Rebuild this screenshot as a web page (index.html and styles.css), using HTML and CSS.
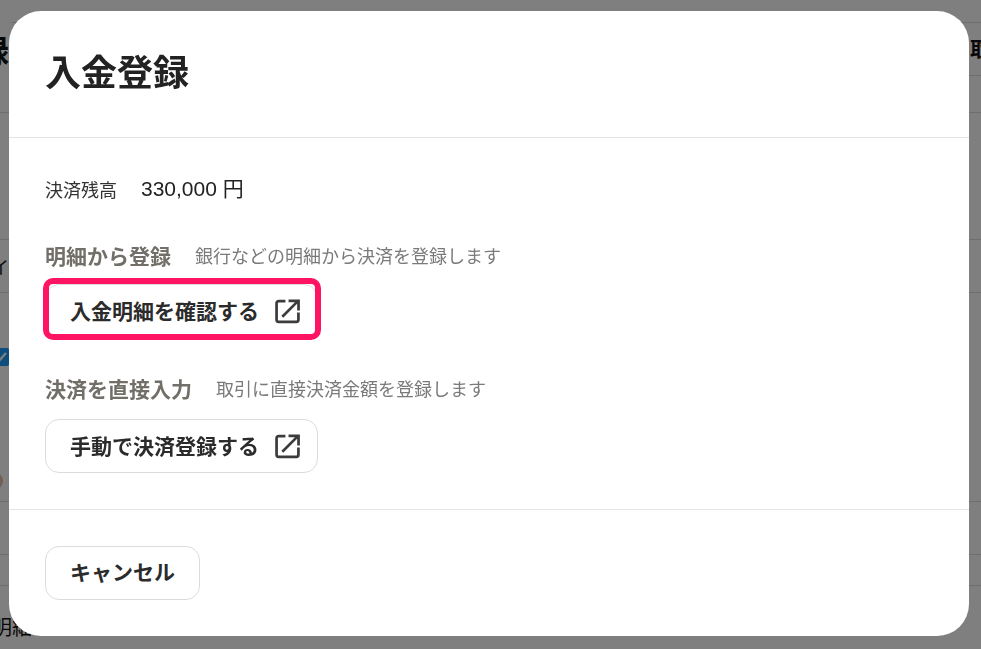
FILE: index.html
```html
<!DOCTYPE html>
<html lang="ja">
<head>
<meta charset="utf-8">
<title>入金登録</title>
<link rel="stylesheet" href="styles.css">
</head>
<body>
<main class="page">
  <div class="row row-top"></div>
  <div class="row row-head"><span class="page-title">録</span><span class="page-tab">取</span></div>
  <div class="row row-a"></div>
  <div class="row row-b"></div>
  <div class="row row-c"><span class="cell-text">イ</span></div>
  <div class="row row-d"><span class="check"><svg viewBox="0 0 18 18" fill="none" stroke="#fff" stroke-width="2.400"><path d="M3.500 9.500L7.500 13.500L15 5"/></svg></span><span class="avatar"></span></div>
  <div class="row row-c"></div>
  <div class="row row-e"></div>
  <div class="row-last">明細</div>
</main>
<div class="overlay">
  <section class="modal">
    <header class="modal-head"><h1>入金登録</h1></header>
    <div class="modal-body">
      <p class="balance"><span class="balance-label">決済残高</span><span class="balance-value">330,000 円</span></p>
      <div class="section section-first">
        <div class="section-head"><h2>明細から登録</h2><span>銀行などの明細から決済を登録します</span></div>
        <div class="btn-wrap">
          <a class="btn btn-wide"><span class="btn-label">入金明細を確認する</span>
            <svg class="ext" viewBox="0 0 24 24" fill="none" stroke="currentColor" stroke-width="2.6"><path d="M10 2H3.500A2 2 0 0 0 1.500 4V20A2 2 0 0 0 3.500 22H20.500A2 2 0 0 0 22.500 20V13"/><path d="M7 17L21.500 2.500M13 1.800H22.600V11"/></svg>
          </a>
          <span class="highlight"></span>
        </div>
      </div>
      <div class="section">
        <div class="section-head"><h2>決済を直接入力</h2><span>取引に直接決済金額を登録します</span></div>
        <a class="btn btn-wide"><span class="btn-label">手動で決済登録する</span>
          <svg class="ext" viewBox="0 0 24 24" fill="none" stroke="currentColor" stroke-width="2.6"><path d="M10 2H3.500A2 2 0 0 0 1.500 4V20A2 2 0 0 0 3.500 22H20.500A2 2 0 0 0 22.500 20V13"/><path d="M7 17L21.500 2.500M13 1.800H22.600V11"/></svg>
        </a>
      </div>
    </div>
    <footer class="modal-foot"><a class="btn btn-cancel"><span class="btn-label btn-label-cancel">キャンセル</span></a></footer>
  </section>
</div>
</body>
</html>
```
FILE: styles.css
```css
* { box-sizing: border-box; }
html, body { margin: 0; height: 100%; overflow: hidden; }
body {
  background: #fff;
  color: #222;
  font-family: "Noto Sans CJK JP", "Liberation Sans", sans-serif;
}
.page { display: flex; flex-direction: column; height: 649px; overflow: hidden; }
.row { flex: none; border-bottom: 1px solid #ddd; display: flex; align-items: center; }
.row-top { height: 23px; margin-left: 12px; }
.row-head { height: 53px; margin-left: 12px; justify-content: space-between; }
.row-a { height: 37px; }
.row-b { height: 127px; }
.row-c { height: 53px; }
.row-d { height: 209px; position: relative; }
.row-e { height: 31px; }
.page-title { margin-left: -35px; font-size: 32px; line-height: 1; font-weight: 700; color: #111; }
.page-tab { margin-right: -9px; font-size: 20px; line-height: 1; font-weight: 700; color: #111; }
.cell-text { margin-left: -9px; font-size: 18px; line-height: 1; }
.check {
  position: absolute; left: -9px; top: 55px; width: 18px; height: 18px;
  background: #1a9cff; border-radius: 2px; display: flex;
}
.avatar {
  position: absolute; left: -15px; top: 179px; width: 18px; height: 18px;
  border-radius: 50%; background: #e0c0a8;
}
.row-last { margin: 29px 0 0 -8px; font-size: 20px; line-height: 1.2; color: #111; }

.overlay {
  position: fixed; inset: 0;
  background: rgba(0, 0, 0, 0.5);
  padding: 11px 12px 13px 9px;
}
.modal {
  height: 625px;
  background: #fff;
  border-radius: 32px;
  display: flex;
  flex-direction: column;
  overflow: hidden;
}
.modal-head { height: 127px; flex: none; padding: 34px 36px 0; border-bottom: 1px solid #e4e4e4; }
.modal-head h1 { margin: 0; font-size: 36px; line-height: 50px; font-weight: 700; color: #222; }
.modal-body { flex: 1; padding: 37px 36px 0; }
.balance { margin: 0; display: flex; align-items: center; height: 28px; }
.balance-label { font-size: 18px; line-height: 28px; width: 96px; color: #333; }
.balance-value { font-size: 21px; line-height: 28px; font-family: "Liberation Sans", "Noto Sans CJK JP", sans-serif; color: #222; }
.section { margin-top: 32px; }
.section.section-first { margin-top: 34px; }
.section-head { display: flex; align-items: center; height: 36px; margin-bottom: 13px; }
.section-first .section-head { margin-bottom: 11px; }
.section-head h2 { margin: 0 24px 0 0; font-size: 21px; line-height: 36px; font-weight: 700; color: #726e68; }
.section-head span { font-size: 18px; line-height: 36px; color: #7a7a7a; }
.btn {
  display: inline-flex; align-items: center; height: 54px;
  background: #fff; border: 1px solid #dcdcdc; border-radius: 14px;
  font-size: 21px; font-weight: 700; color: #2b2b2b; text-decoration: none;
}
.btn-label { margin-top: -3px; line-height: 30px; }
.btn-label-cancel { margin-top: -5px; }
.btn-wide { width: 273px; padding: 0 17px 0 24px; justify-content: space-between; }
.btn-cancel { width: 155px; justify-content: center; font-size: 21px; }
.ext { width: 25px; height: 25px; color: #3c3c3c; flex: none; }
.btn-wrap { position: relative; width: 273px; height: 54px; }
.highlight {
  position: absolute; left: -2px; top: -6px; width: 278px; height: 62px;
  border: 6px solid #ff1464; border-radius: 10px; pointer-events: none;
}
.modal-foot { height: 127px; flex: none; padding: 36px 36px 0; border-top: 1px solid #e4e4e4; }
```
